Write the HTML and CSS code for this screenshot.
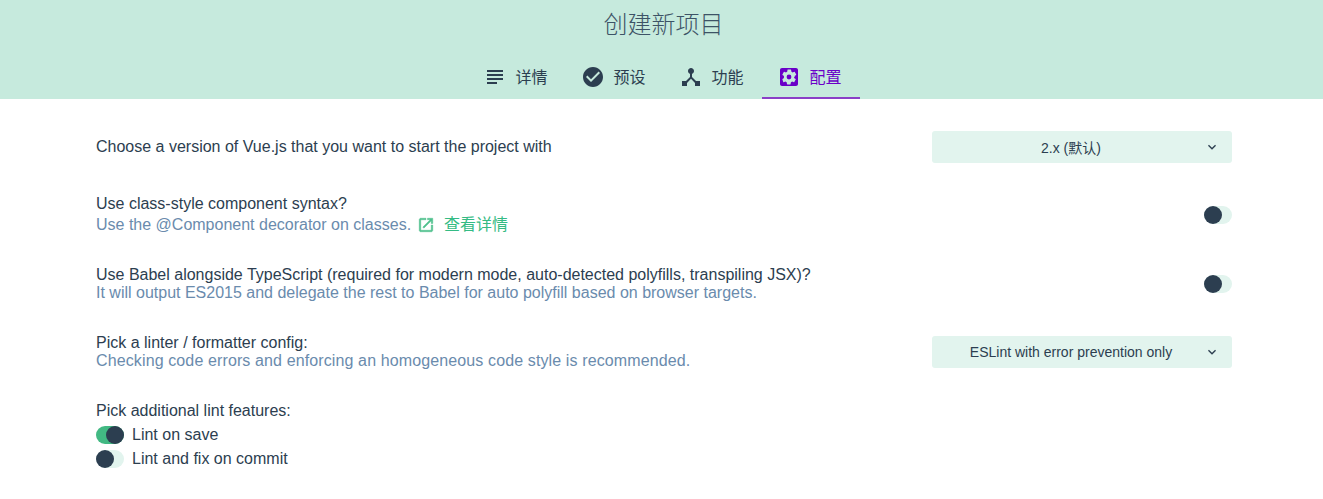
FILE: index.html
```html
<!DOCTYPE html>
<html lang="en">
<head>
  <meta charset="UTF-8">
  <meta name="viewport" content="width=device-width, initial-scale=1.0">
  <title>创建新项目</title>
  <link rel="stylesheet" href="styles.css">
</head>
<body>
  <header class="header">
    <h1 class="title">创建新项目</h1>
    <nav class="tabs">
      <div class="tab">
        <svg class="tab-icon" viewBox="0 0 24 24"><path d="M14 17H4v2h10v-2zm6-8H4v2h16V9zM4 15h16v-2H4v2zM4 5v2h16V5H4z"/></svg>
        <span>详情</span>
      </div>
      <div class="tab">
        <svg class="tab-icon" viewBox="0 0 24 24"><path d="M12 2C6.48 2 2 6.48 2 12s4.48 10 10 10 10-4.48 10-10S17.52 2 12 2zm-2 15l-5-5 1.41-1.41L10 14.17l7.59-7.59L19 8l-9 9z"/></svg>
        <span>预设</span>
      </div>
      <div class="tab">
        <svg class="tab-icon" viewBox="0 0 24 24"><path d="M17 16l-4-4V8.82C14.16 8.4 15 7.3 15 6c0-1.66-1.34-3-3-3S9 4.34 9 6c0 1.3.84 2.4 2 2.82V12l-4 4H3v5h5v-3.05l4-4.2 4 4.2V21h5v-5h-4z"/></svg>
        <span>功能</span>
      </div>
      <div class="tab tab-active">
        <svg class="tab-icon" viewBox="0 0 24 24"><path d="M3 5v14c0 1.1.89 2 2 2h14c1.1 0 2-.9 2-2V5c0-1.1-.9-2-2-2H5c-1.11 0-2 .9-2 2zm14.2 7c0 .3 0 .6-.1.9l1.5 1.2c.1.1.2.3.1.4l-1.4 2.5c-.1.2-.3.2-.4.2l-1.8-.7c-.4.3-.8.5-1.2.7l-.3 1.9c0 .2-.2.3-.4.3h-2.8c-.2 0-.3-.1-.4-.3l-.3-1.9c-.4-.2-.8-.4-1.2-.7l-1.8.7c-.2.1-.3 0-.4-.2L5.4 14.500c-.1-.1 0-.3.1-.4l1.5-1.2c-.1-.3-.1-.6-.1-.9s0-.6.1-.9L5.500 9.900c-.1-.1-.2-.3-.1-.4l1.400-2.500c.1-.2.3-.2.400-.2l1.800.7c.4-.3.800-.5 1.200-.7l.3-1.900c.1-.2.2-.3.400-.3h2.800c.2 0 .3.1.4.3l.3 1.900c.4.2.8.4 1.200.7l1.800-.7c.2-.1.3 0 .4.2l1.400 2.500c.1.1 0 .3-.1.4l-1.500 1.200c.1.300.1.600.1.900zM12 9.600a2.400 2.400 0 1 0 0 4.800 2.400 2.400 0 0 0 0-4.800z"/></svg>
        <span>配置</span>
      </div>
    </nav>
  </header>

  <main class="prompts">
    <section class="prompt prompt-first">
      <div class="prompt-text">
        <div class="prompt-name">Choose a version of Vue.js that you want to start the project with</div>
      </div>
      <div class="select">
        <span class="select-value">2.x (默认)</span>
        <svg class="select-arrow" viewBox="0 0 24 24"><path d="M7.41 8.59L12 13.17l4.59-4.58L18 10l-6 6-6-6z"/></svg>
      </div>
    </section>

    <section class="prompt prompt-second">
      <div class="prompt-text with-link">
        <div class="prompt-name">Use class-style component syntax?</div>
        <div class="prompt-desc">
          Use the @Component decorator on classes.
          <a class="more-link" href="#">
            <svg class="more-icon" viewBox="0 0 24 24"><path d="M19 19H5V5h7V3H5c-1.110 0-2 .9-2 2v14c0 1.100.89 2 2 2h14c1.100 0 2-.9 2-2v-7h-2v7zM14 3v2h3.590l-9.830 9.830 1.410 1.410L19 6.410V10h2V3h-7z"/></svg>
            <span class="more-label">查看详情</span>
          </a>
        </div>
      </div>
      <div class="toggle"><div class="knob"></div></div>
    </section>

    <section class="prompt prompt-third">
      <div class="prompt-text">
        <div class="prompt-name">Use Babel alongside TypeScript (required for modern mode, auto-detected polyfills, transpiling JSX)?</div>
        <div class="prompt-desc tight">It will output ES2015 and delegate the rest to Babel for auto polyfill based on browser targets.</div>
      </div>
      <div class="toggle"><div class="knob"></div></div>
    </section>

    <section class="prompt prompt-fourth">
      <div class="prompt-text">
        <div class="prompt-name">Pick a linter / formatter config:</div>
        <div class="prompt-desc tight wide">Checking code errors and enforcing an homogeneous code style is recommended.</div>
      </div>
      <div class="select">
        <span class="select-value">ESLint with error prevention only</span>
        <svg class="select-arrow" viewBox="0 0 24 24"><path d="M7.41 8.59L12 13.17l4.59-4.58L18 10l-6 6-6-6z"/></svg>
      </div>
    </section>

    <section class="checks">
      <div class="prompt-name">Pick additional lint features:</div>
      <div class="check">
        <div class="toggle toggle-on"><div class="knob"></div></div>
        <span>Lint on save</span>
      </div>
      <div class="check">
        <div class="toggle"><div class="knob"></div></div>
        <span>Lint and fix on commit</span>
      </div>
    </section>
  </main>
</body>
</html>
```

FILE: styles.css
```css
* {
  margin: 0;
  padding: 0;
  box-sizing: border-box;
}
body {
  background: #fff;
  color: #2c3e50;
  font-family: 'Liberation Sans', 'Noto Sans CJK SC', Arial, sans-serif;
  font-size: 16px;
  overflow: hidden;
}
.header {
  height: 99px;
  padding-left: 4px;
  background: #c6eadd;
  display: flex;
  flex-direction: column;
  align-items: center;
}
.title {
  height: 56px;
  padding-top: 7px;
  font-size: 24px;
  line-height: 32px;
  font-weight: 300;
  font-family: 'Noto Sans CJK SC', sans-serif;
  color: #3d5366;
}
.tabs {
  display: flex;
  height: 43px;
}
.tab {
  width: 98px;
  display: flex;
  align-items: center;
  justify-content: center;
  gap: 8px;
  padding-right: 2px;
  padding-bottom: 1px;
  border-bottom: 2px solid transparent;
  font-size: 16px;
  font-family: 'Noto Sans CJK SC', sans-serif;
}
.tab-icon {
  width: 24px;
  height: 24px;
  margin-top: 2px;
  fill: #2c3e50;
  display: block;
}
.tab-active {
  color: #6a00c8;
  border-bottom-color: #8a3fc7;
}
.tab-active .tab-icon {
  fill: #6a00c8;
}
.prompts {
  padding: 0 91px 0 96px;
}
.prompt {
  display: flex;
  align-items: center;
  justify-content: space-between;
}
.prompt-first {
  height: 32px;
  margin-top: 32px;
}
.prompt-second {
  height: 44px;
  margin-top: 30px;
}
.prompt-third {
  height: 36px;
  margin-top: 29px;
}
.prompt-fourth {
  height: 36px;
  margin-top: 32px;
}
.with-link {
  padding-top: 2px;
}
.prompt-name {
  line-height: 18px;
}
.prompt-desc {
  color: #6a8bad;
  line-height: 24px;
  display: flex;
  align-items: center;
  gap: 4px;
}
.prompt-desc.tight {
  line-height: 18px;
}
.prompt-desc.wide {
  letter-spacing: 0.12px;
}
.more-link {
  display: inline-flex;
  align-items: center;
  gap: 9px;
  margin-left: 2px;
  color: #34bb84;
  text-decoration: none;
  font-family: 'Noto Sans CJK SC', sans-serif;
  font-size: 16px;
}
.more-label {
  line-height: 20px;
  margin-bottom: 4px;
}
.more-icon {
  width: 18px;
  height: 18px;
  fill: #4fc08d;
  stroke: #4fc08d;
  stroke-width: 0.6;
}
.select {
  width: 300px;
  height: 32px;
  background: #e2f4ee;
  border-radius: 3px;
  display: flex;
  align-items: center;
  justify-content: center;
  position: relative;
  font-size: 14px;
}
.select-value {
  font-family: 'Liberation Sans', 'Noto Sans CJK SC', sans-serif;
  padding-right: 22px;
}
.select-arrow {
  position: absolute;
  right: 12px;
  top: 8px;
  width: 16px;
  height: 16px;
  fill: #2c3e50;
}
.toggle {
  width: 28px;
  height: 18px;
  border-radius: 9px;
  background: #e2f4ee;
  display: flex;
  align-items: center;
}
.toggle-on {
  background: #42b983;
  justify-content: flex-end;
}
.knob {
  width: 18px;
  height: 18px;
  border-radius: 50%;
  background: #2c3e50;
}
.checks {
  margin-top: 32px;
}
.check {
  display: flex;
  align-items: center;
  gap: 8px;
  height: 24px;
}
.checks .prompt-name {
  margin-bottom: 3px;
}
```
